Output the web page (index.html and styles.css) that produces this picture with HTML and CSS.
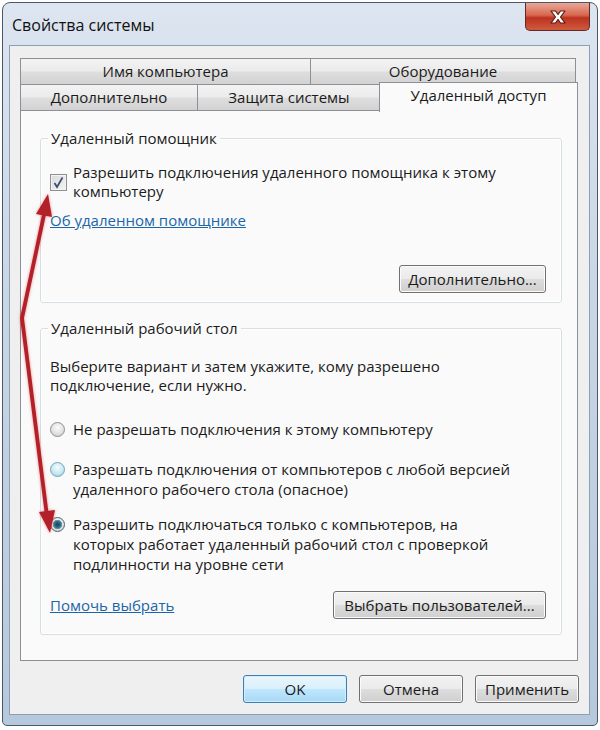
FILE: index.html
```html
<!DOCTYPE html>
<html lang="ru">
<head>
<meta charset="UTF-8">
<title>Свойства системы</title>
<link rel="stylesheet" href="styles.css">
</head>
<body>
<div class="window">
  <div class="titlebar">
    <span class="title">Свойства системы</span>
    <div class="close">
      <svg width="20" height="16" viewBox="0 0 20 16">
        <path d="M3 2 H7.5 L10 5.5 L12.5 2 H17 L12.5 8 L17 14 H12.5 L10 10.5 L7.5 14 H3 L7.5 8 Z" fill="#fff" stroke="#5a1c14" stroke-width="1.2" stroke-linejoin="round"/>
      </svg>
    </div>
  </div>

  <div class="client">
    <div class="tabs">
      <div class="tab-row">
        <div class="tab w-name">Имя компьютера</div>
        <div class="tab w-hw">Оборудование</div>
      </div>
      <div class="tab-row">
        <div class="tab w-adv">Дополнительно</div>
        <div class="tab w-prot">Защита системы</div>
        <div class="tab active">Удаленный доступ</div>
      </div>
    </div>

    <div class="page">
      <fieldset class="group">
        <legend>Удаленный помощник</legend>
        <div class="check-row">
          <span class="checkbox">
            <svg width="15" height="15" viewBox="0 0 15 15"><path d="M3.5 8 L6 12 L11.5 2.5" fill="none" stroke="#3e4d6e" stroke-width="1.7"/></svg>
          </span>
          <span>Разрешить подключения удаленного помощника к этому<br>компьютеру</span>
        </div>
        <a class="link link-about" href="#">Об удаленном помощнике</a>
        <div class="right-row">
          <button class="btn btn-more">Дополнительно...</button>
        </div>
      </fieldset>

      <fieldset class="group group-rdp">
        <legend>Удаленный рабочий стол</legend>
        <p class="hint">Выберите вариант и затем укажите, кому разрешено<br>подключение, если нужно.</p>
        <div class="radio-row first">
          <span class="radio"></span>
          <span>Не разрешать подключения к этому компьютеру</span>
        </div>
        <div class="radio-row second">
          <span class="radio hover"></span>
          <span>Разрешать подключения от компьютеров с любой версией<br>удаленного рабочего стола (опасное)</span>
        </div>
        <div class="radio-row">
          <span class="radio checked"></span>
          <span>Разрешить подключаться только с компьютеров, на<br>которых работает удаленный рабочий стол с проверкой<br>подлинности на уровне сети</span>
        </div>
        <div class="split-row">
          <a class="link" href="#">Помочь выбрать</a>
          <button class="btn btn-users">Выбрать пользователей...</button>
        </div>
      </fieldset>
    </div>

    <div class="footer">
      <button class="btn btn-default">OK</button>
      <button class="btn">Отмена</button>
      <button class="btn">Применить</button>
    </div>
  </div>
</div>

<svg class="arrow" width="600" height="730" viewBox="0 0 600 730">
  <polyline points="45,210 22,318 47,516" fill="none" stroke="#b3202a" stroke-width="3.8" stroke-linejoin="round"/>
  <polygon points="48,194 52,217 36,214" fill="#b3202a"/>
  <polygon points="50,533 55,510 39,512" fill="#b3202a"/>
</svg>
</body>
</html>
```

FILE: styles.css
```css
body {
  margin: 0;
  font-family: "Open Sans", "Noto Sans", sans-serif;
  font-size: 15px;
  color: #1b1b1b;
  background: #fff;
  position: relative;
}

.window {
  margin: 2px 2px 0 2px;
  height: 724px;
  box-sizing: border-box;
  border: 1px solid #4b5768;
  border-radius: 8px 8px 5px 5px;
  background: linear-gradient(#dce5f0, #c9d6e5 40%, #b6c8dc);
  padding: 0 7px 10px 6px;
  display: flex;
  flex-direction: column;
}

.titlebar {
  height: 42px;
  display: flex;
  align-items: flex-start;
}

.title {
  margin: 11px 0 0 3px;
  font-size: 16px;
  line-height: 22px;
  color: #111;
}

.close {
  margin-left: auto;
  width: 65px;
  height: 28px;
  box-sizing: border-box;
  border: 1px solid #5e2b26;
  border-top: none;
  border-radius: 0 0 5px 5px;
  background: linear-gradient(#e9a898, #d8674f 45%, #bb3320 55%, #cf5a3f);
  display: flex;
  align-items: center;
  justify-content: center;
}

.client {
  flex: 1;
  border: 1px solid #8d9fb5;
  background: #efefef;
  padding: 12px 11px 10px 10px;
  display: flex;
  flex-direction: column;
}

/* tabs */
.tabs {
  display: flex;
  flex-direction: column;
}

.tab-row {
  display: flex;
  height: 26px;
}

.tab {
  box-sizing: border-box;
  height: 26px;
  border: 1px solid #8c8f96;
  border-bottom: none;
  background: linear-gradient(#f3f3f3, #ebebeb 48%, #dedede 52%, #d2d2d2);
  margin-right: -1px;
  display: flex;
  align-items: center;
  justify-content: center;
  line-height: 19px;
}

.w-name { width: 291px; }
.w-hw { width: 266px; }
.w-adv { width: 178px; }
.w-prot { width: 184px; }

.tab.active {
  position: relative;
  z-index: 2;
  width: 199px;
  height: 30px;
  margin-top: -2px;
  margin-left: -1px;
  background: #fafafa;
  align-items: flex-start;
  padding-top: 3px;
}

.page {
  height: 551px;
  box-sizing: border-box;
  border: 1px solid #8c8f96;
  background: #fafafa;
  padding: 18px 15px 0 19px;
}

/* group boxes */
.group {
  margin: 0;
  border: 1px solid #d5dfe5;
  border-radius: 3px;
  padding: 15px 15px 9px 9px;
  box-shadow: inset 0 0 0 1px #fff;
}

.group legend {
  padding: 0 3px;
  margin-left: -2px;
  line-height: 19px;
}

.group-rdp {
  margin-top: 16px;
  padding-top: 19px;
  padding-bottom: 15px;
}

.check-row {
  display: flex;
  align-items: center;
  gap: 6px;
  line-height: 19px;
}

.checkbox {
  width: 17px;
  height: 17px;
  box-sizing: border-box;
  border: 1px solid #8e8f8f;
  background: linear-gradient(135deg, #d9dadb, #f4f4f4);
  box-shadow: inset 0 0 0 1px #f4f4f4;
  display: flex;
  align-items: center;
  justify-content: center;
  flex: none;
}

.link {
  color: #1a66a8;
  text-decoration: underline;
  line-height: 19px;
}

.link-about {
  display: inline-block;
  margin-top: 10px;
}

.right-row {
  display: flex;
  justify-content: flex-end;
  margin-top: 35px;
}

.hint {
  margin: 0;
  line-height: 19px;
}

.radio-row {
  display: flex;
  align-items: flex-start;
  gap: 8px;
  line-height: 20px;
  margin-top: 15px;
}

.radio-row.first {
  margin-top: 24px;
}

.radio-row.second {
  margin-top: 20px;
}

.radio {
  width: 15px;
  height: 15px;
  margin-top: 2.5px;
  box-sizing: border-box;
  border-radius: 50%;
  border: 1px solid #8e8f8f;
  background: radial-gradient(circle at 50% 35%, #fbfbfb, #e2e2e2 55%, #c6c6c6);
  flex: none;
}

.radio.hover {
  border-color: #6fa5bb;
  background: radial-gradient(circle at 50% 35%, #f4fcff, #c9e8f2 55%, #98cadb);
}

.radio.checked {
  border-color: #4f6270;
  background: radial-gradient(circle, #16405a 0, #2f6d86 3px, #6ba3b5 4.5px, transparent 5px),
    radial-gradient(circle at 50% 35%, #fbfbfb, #e2e2e2 55%, #c6c6c6);
}

.split-row {
  display: flex;
  justify-content: space-between;
  align-items: center;
  margin-top: 17px;
}

/* buttons */
.btn {
  font: inherit;
  color: #1b1b1b;
  height: 28px;
  padding: 0;
  border: 1px solid #707070;
  border-radius: 3px;
  background: linear-gradient(#f2f2f2, #ebebeb 48%, #dddddd 52%, #cfcfcf);
  box-shadow: inset 0 0 0 1px #fbfbfb;
}

.btn-more { width: 147px; }
.btn-users { width: 213px; }

.footer {
  display: flex;
  justify-content: flex-end;
  gap: 12px;
  margin-top: 14px;
  margin-right: -1px;
}

.footer .btn {
  width: 104px;
}

.btn.btn-default {
  border-color: #3c7fb1;
  background: linear-gradient(#eaf6fd, #d9f0fc 48%, #bee6fd 52%, #a7d9f5);
  box-shadow: inset 0 0 0 1px #d3eefc;
}

.arrow {
  position: absolute;
  top: 0;
  left: 0;
  pointer-events: none;
  filter: drop-shadow(0 0 1.5px rgba(220, 70, 70, 0.6));
}
```
